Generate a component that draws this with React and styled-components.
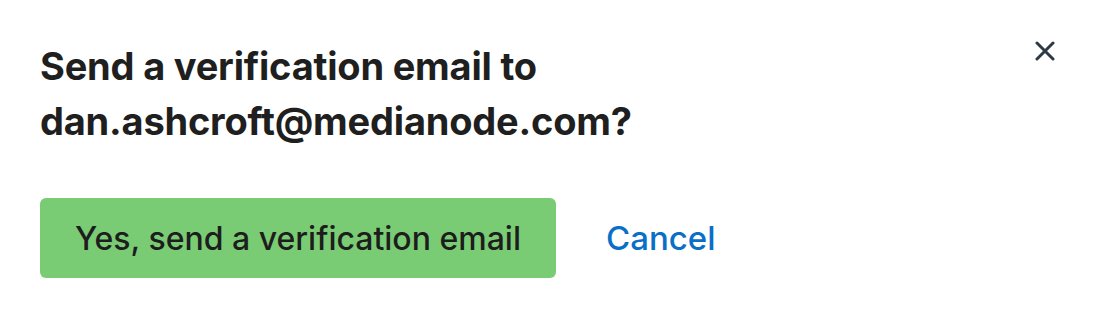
import React from 'react'
import styled, { createGlobalStyle } from 'styled-components'

const GlobalStyle = createGlobalStyle`
  html, body {
    margin: 0;
    padding: 0;
    background: #ffffff;
  }
  body {
    font-family: Inter, "Noto Sans", "Liberation Sans", sans-serif;
    -webkit-font-smoothing: antialiased;
  }
`

const Dialog = styled.div`
  width: 1102px;
  height: 314px;
  box-sizing: border-box;
  padding: 39px 40px 0 40px;
  display: flex;
  align-items: flex-start;
  justify-content: space-between;
  background: #fff;
`

const Body = styled.div`
  display: flex;
  flex-direction: column;
`

const Title = styled.h2`
  margin: 0;
  font-size: 38px;
  line-height: 55px;
  font-weight: 700;
  color: #1f1f1f;
  letter-spacing: -0.2px;
`

const Actions = styled.div`
  display: flex;
  align-items: center;
  gap: 50px;
  margin-top: 49px;
`

const PrimaryButton = styled.button`
  height: 80px;
  padding: 0 35px;
  border: none;
  border-radius: 6px;
  background: #7acc74;
  color: #1d1d1d;
  font-family: inherit;
  font-size: 32px;
  font-weight: 500;
  cursor: pointer;
`

const LinkButton = styled.button`
  border: none;
  background: none;
  padding: 0;
  color: #0a6fc7;
  font-family: inherit;
  font-size: 33px;
  font-weight: 500;
  cursor: pointer;
`

const CloseButton = styled.button`
  border: none;
  background: none;
  padding: 0;
  margin-top: 0;
  margin-right: 5px;
  width: 24px;
  height: 24px;
  display: flex;
  align-items: center;
  justify-content: center;
  cursor: pointer;
`

export default function App () {
  return (
    <>
      <GlobalStyle />
      <Dialog>
        <Body>
          <Title>
            Send a verification email to
            <br />
            dan.ashcroft@medianode.com?
          </Title>
          <Actions>
            <PrimaryButton>Yes, send a verification email</PrimaryButton>
            <LinkButton>Cancel</LinkButton>
          </Actions>
        </Body>
        <CloseButton aria-label='Close'>
          <svg width='20' height='20' viewBox='0 0 20 20'>
            <path d='M2 2 L18 18 M18 2 L2 18' stroke='#2d3a45' strokeWidth='3' strokeLinecap='round' />
          </svg>
        </CloseButton>
      </Dialog>
    </>
  )
}
